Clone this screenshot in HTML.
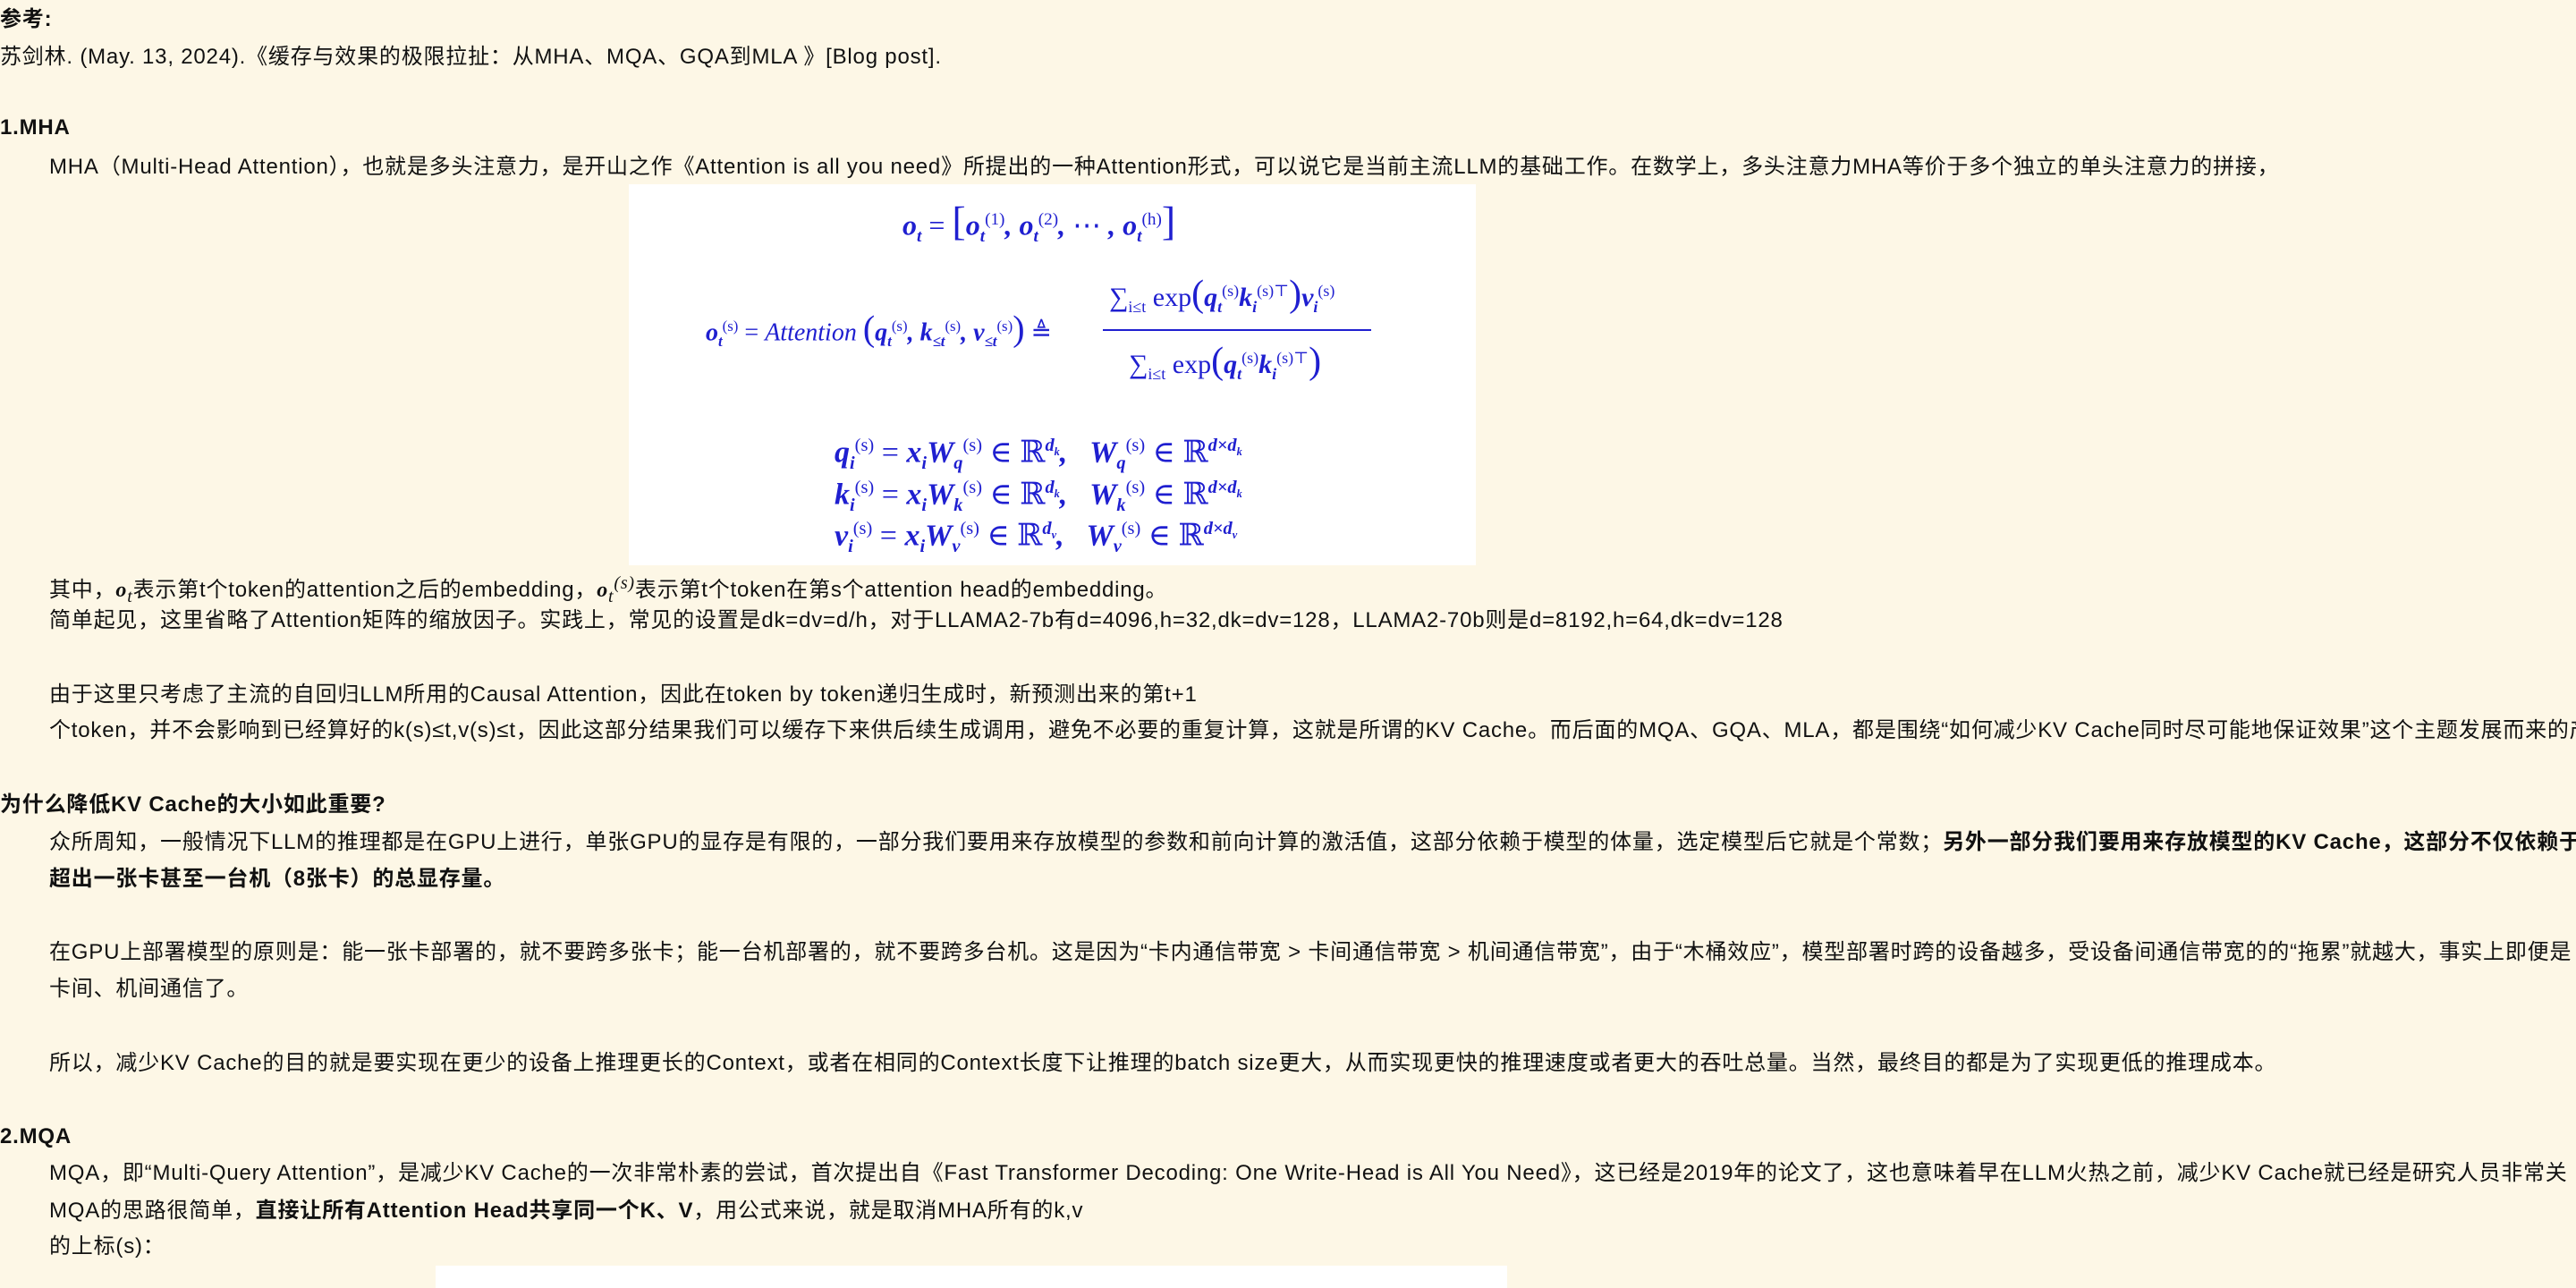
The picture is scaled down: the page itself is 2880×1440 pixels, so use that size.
<!DOCTYPE html>
<html><head><meta charset="utf-8"><style>
html,body{margin:0;padding:0;overflow:hidden}
body{width:2880px;height:1440px;overflow:hidden;background:#fdf7e6;font-family:"Liberation Sans","Noto Sans CJK SC",sans-serif;font-size:24px;color:#111;position:relative}
.l{position:absolute;white-space:nowrap;line-height:30px;letter-spacing:0.8px}
.i{left:55px}
b{font-weight:bold}
.img{position:absolute;background:#fff}
.m{position:absolute;white-space:nowrap;color:#1f1fd0;font-family:"Liberation Serif","DejaVu Serif",serif;font-style:italic;font-weight:bold;line-height:40px}
.m sup,.m sub{font-size:60%}
.n{font-style:normal;font-weight:normal}
</style></head><body>
<div class="l" style="left:0;top:7px"><b>参考:</b></div>
<div class="l" style="left:0;top:49px">苏剑林. (May. 13, 2024).《缓存与效果的极限拉扯：从MHA、MQA、GQA到MLA 》[Blog post].</div>
<div class="l" style="left:0;top:128px"><b>1.MHA</b></div>
<div class="l i" style="top:172px">MHA（Multi-Head Attention），也就是多头注意力，是开山之作《Attention is all you need》所提出的一种Attention形式，可以说它是当前主流LLM的基础工作。在数学上，多头注意力MHA等价于多个独立的单头注意力的拼接，</div>
<div class="img" style="left:703px;top:206px;width:947px;height:426px"></div>
<div class="m" style="left:1009px;top:226px;font-size:32px">o<sub>t</sub> <span class="n">=</span> <span class="n" style="font-size:46px">[</span>o<sub>t</sub><sup class="n">(1)</sup>, o<sub>t</sub><sup class="n">(2)</sup>, <span class="n">⋯</span> , o<sub>t</sub><sup class="n">(h)</sup><span class="n" style="font-size:46px">]</span></div>
<div class="m" style="left:789px;top:345px;font-size:28px">o<sub>t</sub><sup class="n">(s)</sup> <span class="n">=</span> <span style="font-weight:normal">Attention</span> <span class="n" style="font-size:40px">(</span>q<sub>t</sub><sup class="n">(s)</sup>, k<sub>≤t</sub><sup class="n">(s)</sup>, v<sub>≤t</sub><sup class="n">(s)</sup><span class="n" style="font-size:40px">)</span> <span class="n">≜</span></div>
<div class="m" style="left:1240px;top:305px;font-size:30px"><span class="n">∑</span><sub class="n">i≤t</sub> <span class="n">exp</span><span class="n" style="font-size:42px">(</span>q<sub>t</sub><sup class="n">(s)</sup>k<sub>i</sub><sup class="n">(s)⊤</sup><span class="n" style="font-size:42px">)</span>v<sub>i</sub><sup class="n">(s)</sup></div>
<div style="position:absolute;left:1233px;top:368px;width:300px;height:2px;background:#1f1fd0"></div>
<div class="m" style="left:1262px;top:380px;font-size:30px"><span class="n">∑</span><sub class="n">i≤t</sub> <span class="n">exp</span><span class="n" style="font-size:42px">(</span>q<sub>t</sub><sup class="n">(s)</sup>k<sub>i</sub><sup class="n">(s)⊤</sup><span class="n" style="font-size:42px">)</span></div>
<div class="m" style="left:933px;top:478px;font-size:34px">q<sub>i</sub><sup class="n">(s)</sup> <span class="n">=</span> x<sub>i</sub>W<sub>q</sub><sup class="n">(s)</sup> <span class="n">∈ ℝ</span><sup>d<sub>k</sub></sup>, &nbsp; W<sub>q</sub><sup class="n">(s)</sup> <span class="n">∈ ℝ</span><sup>d×d<sub>k</sub></sup></div>
<div class="m" style="left:933px;top:525px;font-size:34px">k<sub>i</sub><sup class="n">(s)</sup> <span class="n">=</span> x<sub>i</sub>W<sub>k</sub><sup class="n">(s)</sup> <span class="n">∈ ℝ</span><sup>d<sub>k</sub></sup>, &nbsp; W<sub>k</sub><sup class="n">(s)</sup> <span class="n">∈ ℝ</span><sup>d×d<sub>k</sub></sup></div>
<div class="m" style="left:933px;top:571px;font-size:34px">v<sub>i</sub><sup class="n">(s)</sup> <span class="n">=</span> x<sub>i</sub>W<sub>v</sub><sup class="n">(s)</sup> <span class="n">∈ ℝ</span><sup>d<sub>v</sub></sup>, &nbsp; W<sub>v</sub><sup class="n">(s)</sup> <span class="n">∈ ℝ</span><sup>d×d<sub>v</sub></sup></div>
<div class="l i" style="top:637px">其中，<i style="font-family:'Liberation Serif',serif"><b>o</b><sub>t</sub></i>表示第t个token的attention之后的embedding，<i style="font-family:'Liberation Serif',serif"><b>o</b><sub>t</sub><sup>(s)</sup></i>表示第t个token在第s个attention head的embedding。</div>
<div class="l i" style="top:679px">简单起见，这里省略了Attention矩阵的缩放因子。实践上，常见的设置是dk=dv=d/h，对于LLAMA2-7b有d=4096,h=32,dk=dv=128，LLAMA2-70b则是d=8192,h=64,dk=dv=128</div>
<div class="l i" style="top:762px">由于这里只考虑了主流的自回归LLM所用的Causal Attention，因此在token by token递归生成时，新预测出来的第t+1</div>
<div class="l i" style="top:802px">个token，并不会影响到已经算好的k(s)≤t,v(s)≤t，因此这部分结果我们可以缓存下来供后续生成调用，避免不必要的重复计算，这就是所谓的KV Cache。而后面的MQA、GQA、MLA，都是围绕“如何减少KV Cache同时尽可能地保证效果”这个主题发展而来的产物。</div>
<div class="l" style="left:0;top:885px"><b>为什么降低KV Cache的大小如此重要?</b></div>
<div class="l i" style="top:927px">众所周知，一般情况下LLM的推理都是在GPU上进行，单张GPU的显存是有限的，一部分我们要用来存放模型的参数和前向计算的激活值，这部分依赖于模型的体量，选定模型后它就是个常数；<b>另外一部分我们要用来存放模型的KV Cache，这部分不仅依赖于模型的体量</b></div>
<div class="l i" style="top:968px"><b>超出一张卡甚至一台机（8张卡）的总显存量。</b></div>
<div class="l i" style="top:1050px">在GPU上部署模型的原则是：能一张卡部署的，就不要跨多张卡；能一台机部署的，就不要跨多台机。这是因为“卡内通信带宽 &gt; 卡间通信带宽 &gt; 机间通信带宽”，由于“木桶效应”，模型部署时跨的设备越多，受设备间通信带宽的的“拖累”就越大，事实上即便是</div>
<div class="l i" style="top:1091px">卡间、机间通信了。</div>
<div class="l i" style="top:1174px">所以，减少KV Cache的目的就是要实现在更少的设备上推理更长的Context，或者在相同的Context长度下让推理的batch size更大，从而实现更快的推理速度或者更大的吞吐总量。当然，最终目的都是为了实现更低的推理成本。</div>
<div class="l" style="left:0;top:1256px"><b>2.MQA</b></div>
<div class="l i" style="top:1297px">MQA，即“Multi-Query Attention”，是减少KV Cache的一次非常朴素的尝试，首次提出自《Fast Transformer Decoding: One Write-Head is All You Need》，这已经是2019年的论文了，这也意味着早在LLM火热之前，减少KV Cache就已经是研究人员非常关</div>
<div class="l i" style="top:1339px">MQA的思路很简单，<b>直接让所有Attention Head共享同一个K、V</b>，用公式来说，就是取消MHA所有的k,v</div>
<div class="l i" style="top:1379px">的上标(s)：</div>
<div class="img" style="left:487px;top:1415px;width:1198px;height:25px"></div>
</body></html>
